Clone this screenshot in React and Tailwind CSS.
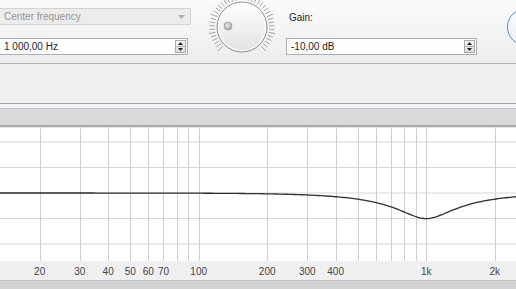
const X0 = 198.7;
const DEC = 227.5;
const fx = (f) => X0 + DEC * Math.log10(f / 100);

const gridFreqs = [20, 30, 40, 50, 60, 70, 80, 90, 100, 200, 300, 400, 500, 600, 700, 800, 900, 1000, 2000];
const labels = [
  [20, "20"], [30, "30"], [40, "40"], [50, "50"], [60, "60"], [70, "70"],
  [100, "100"], [200, "200"], [300, "300"], [400, "400"], [1000, "1k"], [2000, "2k"],
];
const hLines = [14, 39.5, 65, 90.6, 116];

// peaking eq, -10 dB @ 1 kHz
function curvePath() {
  const A = Math.pow(10, -10 / 40);
  const Q = 1.25;
  let d = "";
  for (let x = 0; x <= 516; x += 2) {
    const f = 100 * Math.pow(10, (x - X0) / DEC);
    const w = f / 1000;
    const a = (1 - w * w) ** 2;
    const num = a + (w * A / Q) ** 2;
    const den = a + (w / (A * Q)) ** 2;
    const db = 10 * Math.log10(num / den);
    const y = 65 - db * 2.56;
    d += (x === 0 ? "M" : "L") + x + "," + y.toFixed(2) + " ";
  }
  return d;
}

function SpinButtons() {
  return (
    <div className="flex h-[13px] w-[11px] flex-col border border-[#a9a9a9] bg-gradient-to-b from-[#f6f6f6] to-[#dcdcdc]">
      <div className="flex flex-1 items-center justify-center border-b border-[#b8b8b8]">
        <svg width="5" height="3" viewBox="0 0 5 3"><path d="M0 3L2.5 0L5 3Z" fill="#222" /></svg>
      </div>
      <div className="flex flex-1 items-center justify-center">
        <svg width="5" height="3" viewBox="0 0 5 3"><path d="M0 0L2.5 3L5 0Z" fill="#222" /></svg>
      </div>
    </div>
  );
}

function Knob() {
  const cx = 38, cy = 27;
  const ticks = [];
  for (let i = 0; i <= 40; i++) {
    const ang = (-225 + (270 * i) / 40) * (Math.PI / 180);
    const r1 = 27, r2 = i % 5 === 0 ? 34 : 32.5;
    ticks.push(
      <line
        key={i}
        x1={cx + r1 * Math.cos(ang)}
        y1={cy + r1 * Math.sin(ang)}
        x2={cx + r2 * Math.cos(ang)}
        y2={cy + r2 * Math.sin(ang)}
        stroke="#a4a4a4"
        strokeWidth="1"
      />
    );
  }
  return (
    <svg width="76" height="64" viewBox="0 0 76 64">
      <defs>
        <linearGradient id="kb" x1="0" y1="0" x2="0" y2="1">
          <stop offset="0" stopColor="#ffffff" />
          <stop offset="1" stopColor="#e2e2e2" />
        </linearGradient>
        <radialGradient id="dot" cx="0.4" cy="0.4" r="0.6">
          <stop offset="0" stopColor="#e8e8e8" />
          <stop offset="1" stopColor="#a9a9a9" />
        </radialGradient>
      </defs>
      {ticks}
      <circle cx={cx} cy={cy} r="25" fill="url(#kb)" stroke="#8f8f8f" strokeWidth="1" />
      <circle cx={cx} cy={cy} r="23.5" fill="none" stroke="#ffffff" strokeWidth="1" />
      <circle cx={cx - 14} cy={cy - 1} r="4" fill="url(#dot)" stroke="#9a9a9a" strokeWidth="0.8" />
    </svg>
  );
}

export default function App() {
  return (
    <div
      className="flex h-[289px] w-[516px] flex-col overflow-hidden bg-[#f0f0f0] text-[10px] text-[#1e1e1e]"
      style={{ fontFamily: '"Liberation Sans", Arial, sans-serif' }}
    >
      {/* top controls */}
      <div className="flex h-[64px] shrink-0 items-start border-b border-[#b4b4b4] bg-gradient-to-b from-[#fbfbfb] to-[#ededed]">
        <div className="-ml-[1px] w-[192px] shrink-0">
          <div className="mt-[8px] flex h-[17px] items-center justify-between border border-[#d2d2d2] bg-[#ececec] pl-[4px] pr-[5px] text-[#959595]">
            <span>Center frequency</span>
            <svg width="7" height="4" viewBox="0 0 7 4"><path d="M0 0L3.5 4L7 0Z" fill="#b0b0b0" /></svg>
          </div>
          <div className="mt-[13px] mr-[3px] flex h-[17px] items-center justify-between border border-[#abadb3] bg-white pl-[4px] pr-[1px]">
            <span>1 000,00 Hz</span>
            <SpinButtons />
          </div>
        </div>
        <div className="ml-[13px] shrink-0">
          <Knob />
        </div>
        <div className="ml-[6px] w-[191px] shrink-0">
          <div className="mt-[11px] h-[13px] pl-[3px] leading-[13px]">Gain:</div>
          <div className="mt-[14px] flex h-[17px] items-center justify-between border border-[#abadb3] bg-white pl-[4px] pr-[1px]">
            <span>-10,00 dB</span>
            <SpinButtons />
          </div>
        </div>
        <div className="ml-[30px] mt-[8px] h-[38px] w-[38px] shrink-0 rounded-full border-[1.5px] border-[#5b8dc4] bg-gradient-to-b from-[#ffffff] to-[#e6eef8]" />
      </div>

      {/* empty toolbar area */}
      <div className="h-[39px] shrink-0 bg-[#f0f0f0]" />

      {/* header strip */}
      <div className="shrink-0 border-t border-[#a6a6a6]">
        <div className="h-[4px] bg-[#f2f2f2]" />
        <div className="h-[1px] bg-[#c6c8d0]" />
        <div className="h-[16px] bg-[#d9d9d9]" />
        <div className="h-[2px] bg-[#a9a9a9]" />
      </div>

      {/* chart */}
      <div className="shrink-0 bg-white">
        <svg width="516" height="153" viewBox="0 0 516 153" className="block">
          <rect x="0" y="0" width="516" height="134" fill="#ffffff" />
          <line x1="0" y1="0.5" x2="516" y2="0.5" stroke="#e6e6e6" />
          {hLines.map((y) => (
            <line key={y} x1="0" y1={y + 1} x2="516" y2={y + 1} stroke="#d6d6d6" strokeWidth="1" />
          ))}
          {gridFreqs.map((f) => {
            const x = Math.round(fx(f)) + 0.5;
            return <line key={f} x1={x} y1="0" x2={x} y2="134" stroke="#cfcfcf" strokeWidth="1" />;
          })}
          <g transform="translate(0,1)">
            <path d={curvePath()} fill="none" stroke="#2e2e2e" strokeWidth="1.3" />
          </g>
          <rect x="0" y="134" width="516" height="19" fill="#f0f0f0" />
          {labels.map(([f, t]) => (
            <text
              key={t}
              x={fx(f)}
              y="148"
              textAnchor="middle"
              fontSize="10"
              fill="#444444"
              fontFamily='"Liberation Sans", Arial, sans-serif'
            >
              {t}
            </text>
          ))}
        </svg>
      </div>

      {/* bottom bar */}
      <div className="flex-1 border-t border-[#c4c4c4] bg-[#d4d4d4]" />
    </div>
  );
}
